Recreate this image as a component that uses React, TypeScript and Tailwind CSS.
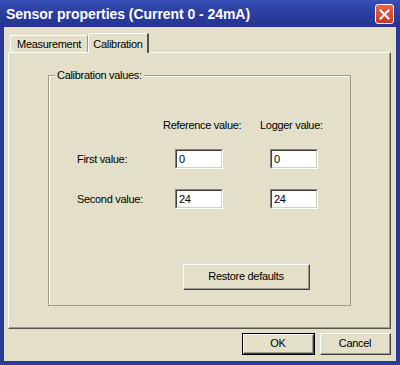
import React from "react";

const font = { fontFamily: '"Liberation Sans", Arial, sans-serif' };

function Input({ value }: { value: string }) {
  return (
    <div className="w-[48px] h-[20px] bg-white border-t border-l border-t-[#808080] border-l-[#808080] border-b border-r border-b-white border-r-white">
      <div className="w-full h-full border-t border-l border-t-[#404040] border-l-[#404040] border-b border-r border-b-[#d4d0c8] border-r-[#d4d0c8] pl-[2px] text-[11px] leading-[16px] text-black">
        {value}
      </div>
    </div>
  );
}

function Button({ label, w, h, def }: { label: string; w: string; h: string; def?: boolean }) {
  return (
    <div className={`${w} ${h} ${def ? "border border-black" : ""}`}>
      <div className="w-full h-full border-t border-l border-t-white border-l-white border-b border-r border-b-[#404040] border-r-[#404040]">
        <div className="w-full h-full border-b border-r border-b-[#9d9a8a] border-r-[#9d9a8a] flex items-center justify-center text-[11px] text-black">
          {label}
        </div>
      </div>
    </div>
  );
}

export default function App() {
  return (
    <div style={font} className="w-[400px] h-[365px] flex flex-col bg-[#2a3a98] overflow-hidden tracking-[-0.3px]">
      {/* Title bar */}
      <div className="h-[27px] flex items-center justify-between pl-[6px] pr-[6px] bg-gradient-to-b from-[#3850b8] via-[#2a3c9e] to-[#25358f]">
        <span className="text-white font-bold text-[14px] tracking-[-0.05px] mt-[1px]">
          Sensor properties (Current 0 - 24mA)
        </span>
        <div className="w-[19px] h-[20px] rounded-[3px] border border-white bg-gradient-to-b from-[#e2664a] to-[#c8381c] flex items-center justify-center mt-[1px]">
          <svg width="11" height="11" viewBox="0 0 11 11">
            <path d="M1.5 1.5 L9.5 9.5 M9.5 1.5 L1.5 9.5" stroke="white" strokeWidth="2" strokeLinecap="square" />
          </svg>
        </div>
      </div>
      {/* Client */}
      <div className="flex-1 mx-[4px] mb-[4px] bg-[#e3dfc8] flex flex-col pt-[6px] pl-[4px] pr-[5px]">
        {/* Tabs */}
        <div className="flex items-end pl-[2px] h-[19px]">
          <div className="h-[17px] w-[78px] border-t border-l border-t-white border-l-white border-r border-r-[#9d9a8a] rounded-tl-[2px] flex items-center justify-center text-[11px] text-black">
            Measurement
          </div>
          <div className="h-[20px] w-[61px] -mb-[1px] relative z-10 bg-[#e3dfc8] border-t border-l border-t-white border-l-white border-r-2 border-r-[#55534a] rounded-tl-[2px] flex items-start justify-center pt-[2px] text-[11px] text-black">
            Calibration
          </div>
        </div>
        {/* Panel */}
        <div className="h-[277px] border-t border-l border-t-white border-l-white border-b border-r border-b-[#55534a] border-r-[#55534a]">
          <div className="w-full h-full border-b border-r border-b-[#9d9a8a] border-r-[#9d9a8a] pt-[22px] pl-[39px]">
            {/* Group box */}
            <div className="relative w-[303px] h-[231px] border border-[#9d9a8a]">
              <div className="w-full h-full border-t border-l border-t-white border-l-white">
                <div className="absolute -top-[8px] left-[6px] bg-[#e3dfc8] px-[2px] text-[11px] text-black leading-[14px]">
                  Calibration values:
                </div>
                <div className="pt-[41px] pl-[27px] grid grid-cols-[86px_97px_70px] gap-y-[20px] items-center text-[11px] text-black">
                  <div className="h-[14px] leading-[14px]" />
                  <div className="h-[14px] leading-[14px]">Reference value:</div>
                  <div className="h-[14px] leading-[14px]">Logger value:</div>

                  <div className="mt-[-2px]">First value:</div>
                  <div className="pl-[12px] mt-[-3px]"><Input value="0" /></div>
                  <div className="pl-[10px] mt-[-3px]"><Input value="0" /></div>

                  <div>Second value:</div>
                  <div className="pl-[12px]"><Input value="24" /></div>
                  <div className="pl-[10px]"><Input value="24" /></div>
                </div>
                <div className="mt-[55px] ml-[133px]">
                  <Button label="Restore defaults" w="w-[127px]" h="h-[26px]" />
                </div>
              </div>
            </div>
          </div>
        </div>
        {/* Bottom buttons */}
        <div className="flex justify-end gap-[5px] mt-[4px] pr-[0px]">
          <Button label="OK" w="w-[73px]" h="h-[22px]" def />
          <Button label="Cancel" w="w-[71px]" h="h-[22px]" />
        </div>
      </div>
    </div>
  );
}
